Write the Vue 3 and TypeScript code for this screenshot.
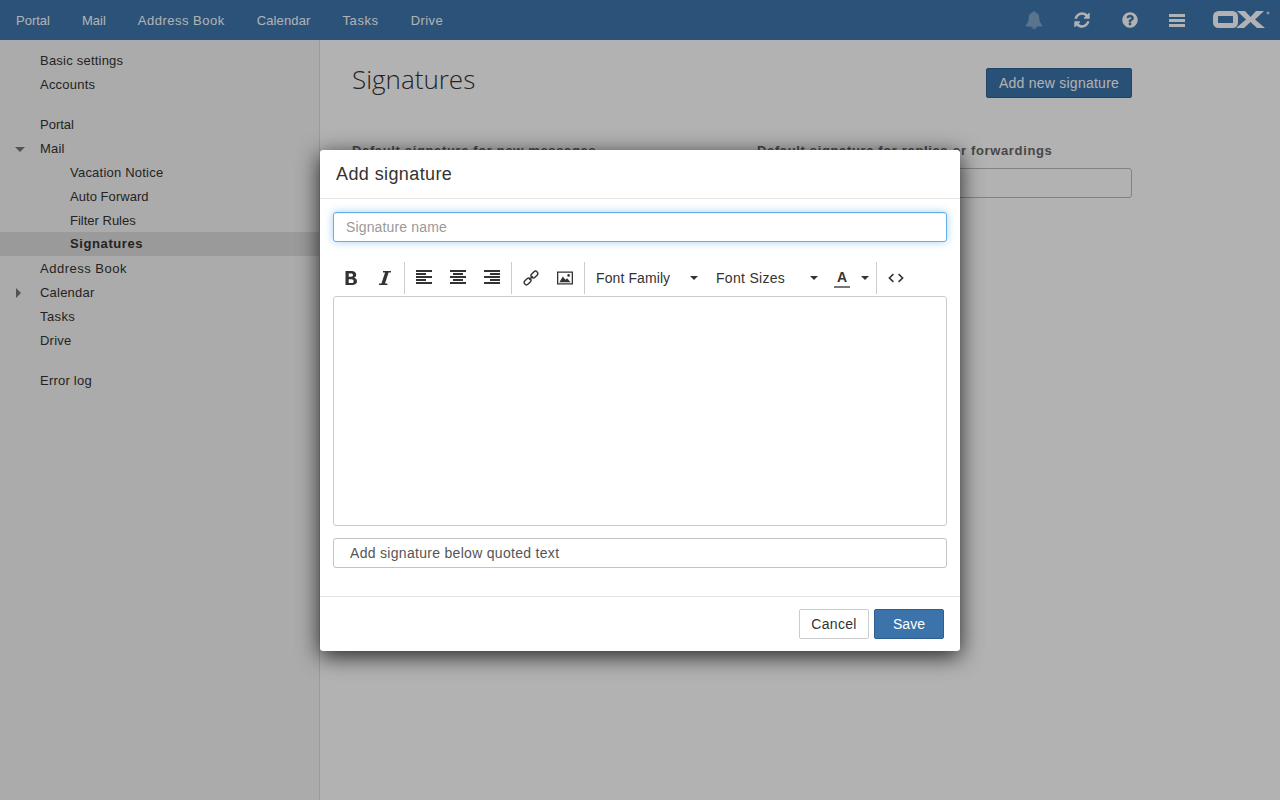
<script setup lang="ts">
const topNav: string[] = ['Portal', 'Mail', 'Address Book', 'Calendar', 'Tasks', 'Drive']
interface TreeItem { label: string; level: number; arrow?: 'down' | 'right'; active?: boolean; gap?: boolean }
const tree: TreeItem[] = [
  { label: 'Basic settings', level: 0 },
  { label: 'Accounts', level: 0 },
  { label: 'Portal', level: 0, gap: true },
  { label: 'Mail', level: 0, arrow: 'down' },
  { label: 'Vacation Notice', level: 1 },
  { label: 'Auto Forward', level: 1 },
  { label: 'Filter Rules', level: 1 },
  { label: 'Signatures', level: 1, active: true },
  { label: 'Address Book', level: 0 },
  { label: 'Calendar', level: 0, arrow: 'right' },
  { label: 'Tasks', level: 0 },
  { label: 'Drive', level: 0 },
  { label: 'Error log', level: 0, gap: true }
]
</script>

<template>
  <div class="page">
    <header class="topbar">
      <nav class="nav">
        <a v-for="n in topNav" :key="n" class="nav-item">{{ n }}</a>
      </nav>
      <div class="actions">
        <svg class="ic bell" viewBox="0 0 1792 1792"><path d="M912 1696q0-16-16-16-59 0-101.5-42.5t-42.5-101.5q0-16-16-16t-16 16q0 73 51.5 124.5t124.5 51.5q16 0 16-16zm816-288q0 52-38 90t-90 38h-448q0 106-75 181t-181 75-181-75-75-181h-448q-52 0-90-38t-38-90q50-42 91-88t85-119.5 74.5-158.5 50-206 19.5-260q0-152 117-282.5t307-158.5q-8-19-8-39 0-40 28-68t68-28 68 28 28 68q0 20-8 39 190 28 307 158.5t117 282.5q0 139 19.5 260t50 206 74.5 158.5 85 119.5 91 88z"/></svg>
        <svg class="ic" viewBox="0 0 1792 1792"><path d="M1639 1056q0 5-1 7-64 268-268 434.5t-478 166.5q-146 0-282.5-55t-243.5-157l-129 129q-19 19-45 19t-45-19-19-45v-448q0-26 19-45t45-19h448q26 0 45 19t19 45-19 45l-137 137q71 66 161 102t187 36q134 0 250-65t186-179q11-17 53-117 8-23 30-23h192q13 0 22.5 9.5t9.5 22.5zm25-800v448q0 26-19 45t-45 19h-448q-26 0-45-19t-19-45 19-45l138-138q-148-137-349-137-134 0-250 65t-186 179q-11 17-53 117-8 23-30 23h-199q-13 0-22.5-9.5t-9.5-22.5v-7q65-268 270-434.5t480-166.5q146 0 284 55.5t245 156.5l130-129q19-19 45-19t45 19 19 45z"/></svg>
        <svg class="ic help" viewBox="0 0 1792 1792"><path d="M1024 1376v-192q0-14-9-23t-23-9h-192q-14 0-23 9t-9 23v192q0 14 9 23t23 9h192q14 0 23-9t9-23zm256-672q0-88-55.5-163t-138.5-116-170-41q-243 0-371 213-15 24 8 42l132 100q7 6 19 6 16 0 25-12 53-68 86-92 34-24 86-24 48 0 85.5 26t37.5 59q0 38-20 61t-68 45q-63 28-115.5 86.5t-52.5 125.5v36q0 14 9 23t23 9h192q14 0 23-9t9-23q0-19 21.5-49.5t54.5-49.5q32-18 49-28.5t46-35 44.5-48 28-60.5 12.5-81zm384 192q0 209-103 385.5t-279.5 279.5-385.5 103-385.5-103-279.5-279.5-103-385.5 103-385.5 279.5-279.5 385.5-103 385.5 103 279.5 279.5 103 385.5z"/></svg>
        <svg class="ic bars" viewBox="0 0 16 16"><path d="M0 2h16v3H0zM0 7h16v3H0zM0 12h16v3H0z"/></svg>
        <svg class="logo" viewBox="0 0 58 20">
          <rect x="2.5" y="3.5" width="20" height="12" rx="3" fill="none" stroke="#fff" stroke-width="5"/>
          <path d="M24 1h8l5.5 6L43 1h8l-9 8.5L52 18h-8l-6.500-6L31 18h-8l10-8.500z" fill="#fff"/>
          <circle cx="55" cy="3" r="1.500" fill="#fff" opacity="0.7"/>
        </svg>
      </div>
    </header>

    <div class="main">
      <aside class="sidebar">
        <div
          v-for="t in tree"
          :key="t.label + t.level"
          class="tree-item"
          :class="{ sub: t.level === 1, active: t.active, gap: t.gap }"
        >
          <span v-if="t.arrow" class="arrow" :class="t.arrow"></span>
          {{ t.label }}
        </div>
      </aside>
      <section class="content">
        <div class="head">
          <h1>Signatures</h1>
          <button class="btn primary add">Add new signature</button>
        </div>
        <div class="defaults">
          <div class="col">
            <label>Default signature for new messages</label>
            <div class="fake-select"></div>
          </div>
          <div class="col">
            <label>Default signature for replies or forwardings</label>
            <div class="fake-select"></div>
          </div>
        </div>
      </section>
    </div>

    <div class="backdrop"></div>
    <div class="modal-wrap">
      <div class="modal">
        <div class="m-head">Add signature</div>
        <div class="m-body">
          <input class="name" type="text" placeholder="Signature name" />
          <div class="toolbar">
            <div class="grp first">
              <span class="tb"><svg viewBox="0 0 16 16" width="16" height="16"><path fill-rule="evenodd" d="M2.500 1h6c3 0 4.700 1.500 4.700 3.700 0 1.500-.8 2.600-2.100 3.100 1.800.5 2.900 1.700 2.900 3.500 0 2.600-2 3.700-4.900 3.700H2.500zM5.700 3.400v3.400h2.400c1.200 0 1.900-.6 1.900-1.700s-.7-1.700-1.900-1.700zM5.700 9.200v3.900h2.900c1.300 0 2-.7 2-1.950s-.7-1.950-2-1.950z"/></svg></span>
              <span class="tb"><svg viewBox="0 0 16 16" width="16" height="16"><path d="M6 1h8v1.500h-2.400L8 13.500h2.400V15H2v-1.500h2.400L8.100 2.500H6z"/></svg></span>
            </div>
            <div class="grp">
              <span class="tb"><svg viewBox="0 0 16 16" width="16" height="16"><path d="M0 0h16v2H0zM0 3h10v2H0zM0 6h16v2H0zM0 9h10v2H0zM0 12h16v2H0z"/></svg></span>
              <span class="tb"><svg viewBox="0 0 16 16" width="16" height="16"><path d="M0 0h16v2H0zM3 3h10v2H3zM0 6h16v2H0zM3 9h10v2H3zM0 12h16v2H0z"/></svg></span>
              <span class="tb"><svg viewBox="0 0 16 16" width="16" height="16"><path d="M0 0h16v2H0zM6 3h10v2H6zM0 6h16v2H0zM6 9h10v2H6zM0 12h16v2H0z"/></svg></span>
            </div>
            <div class="grp">
              <span class="tb"><svg viewBox="0 0 16 16" width="16" height="16" fill="none" stroke="#333" stroke-width="1.400"><rect x="-3.800" y="-2.300" width="7.600" height="4.600" rx="2.300" transform="translate(4.600 11.400) rotate(-45)"/><rect x="-3.800" y="-2.300" width="7.600" height="4.600" rx="2.300" transform="translate(11.400 4.600) rotate(-45)"/><path d="M6.200 9.800l3.600-3.600"/></svg></span>
              <span class="tb"><svg viewBox="0 0 16 16" width="16" height="16"><path fill-rule="evenodd" d="M0 1.500h16v13H0zM1.300 2.800v10.400h13.400V2.800z"/><path d="M2.400 12.200l3.400-5.600 2.600 3.200 1.600-1.600 3.600 4z"/><circle cx="11.600" cy="5.400" r="1.300"/></svg></span>
            </div>
            <div class="grp">
              <span class="drop family">Font Family<i class="caret"></i></span>
              <span class="drop sizes">Font Sizes<i class="caret"></i></span>
              <span class="drop color"><b class="a">A</b><i class="caret"></i></span>
            </div>
            <div class="grp last">
              <span class="tb"><svg viewBox="0 0 16 16" width="16" height="16" fill="none" stroke="#333" stroke-width="1.600"><path d="M5.400 4.200L1.400 8l4 3.800M10.600 4.200l4 3.800-4 3.800"/></svg></span>
            </div>
          </div>
          <div class="editor"></div>
          <div class="pos">Add signature below quoted text</div>
        </div>
        <div class="m-foot">
          <button class="btn cancel">Cancel</button>
          <button class="btn primary">Save</button>
        </div>
      </div>
    </div>
  </div>
</template>

<style>
html, body { margin: 0; background: #fff; }
</style>

<style scoped>
.page {
  position: relative;
  width: 1280px;
  height: 800px;
  overflow: hidden;
  font-family: "Liberation Sans", Arial, sans-serif;
  font-size: 13px;
  color: #333;
}
.topbar {
  height: 40px;
  background: #3e76ae;
  display: flex;
  justify-content: space-between;
  align-items: center;
  color: #fff;
}
.nav { display: flex; padding-left: 16px; gap: 32px; }
.nav-item { color: #fff; }
.nav-item:nth-child(3) { letter-spacing: 0.5px; }
.nav-item:nth-child(4) { letter-spacing: 0.12px; }
.nav-item:nth-child(5) { letter-spacing: 0.6px; }
.nav-item:nth-child(6) { letter-spacing: 0.4px; }
.actions { display: flex; align-items: center; padding-right: 9px; }
.ic { width: 18px; height: 18px; fill: #fff; margin-right: 30px; flex: none; }
.ic.bars { width: 16px; height: 16px; margin-right: 28px; }
.bell { opacity: 0.35; }
.logo { width: 58px; height: 20px; flex: none; }
.main { display: flex; height: 760px; }
.sidebar {
  width: 319px;
  background: #f5f5f5;
  border-right: 1px solid #ddd;
  padding-top: 9px;
  letter-spacing: 0.22px;
}
.tree-item {
  position: relative;
  height: 24px;
  line-height: 24px;
  padding-left: 40px;
  color: #333;
}
.tree-item:nth-child(3),
.tree-item:nth-child(7) { letter-spacing: 0; }
.tree-item:nth-child(6) { letter-spacing: 0.05px; }
.tree-item:nth-child(9) { letter-spacing: 0.5px; }
.tree-item:nth-child(11) { letter-spacing: 0.4px; }
.tree-item.gap { margin-top: 16px; }
.tree-item.sub { padding-left: 70px; }
.tree-item.active {
  background: #ddd;
  font-weight: 700;
  margin-top: -1px;
  margin-bottom: 1px;
  letter-spacing: 0.6px;
}
.arrow { position: absolute; width: 0; height: 0; }
.arrow.down {
  left: 15px; top: 10px;
  border-left: 5px solid transparent;
  border-right: 5px solid transparent;
  border-top: 5px solid #777;
}
.arrow.right {
  left: 16px; top: 7px;
  border-top: 5px solid transparent;
  border-bottom: 5px solid transparent;
  border-left: 5px solid #777;
}
.content { flex: 1; padding: 0 148px 0 32px; }
.head {
  display: flex;
  justify-content: space-between;
  align-items: flex-start;
  padding-top: 28px;
}
h1 {
  margin: -1px 0 0;
  font-family: "Open Sans", sans-serif;
  font-weight: 300;
  font-size: 26px;
  line-height: 24px;
  color: #333;
}
.btn {
  height: 30px;
  box-sizing: border-box;
  border: 1px solid #ccc;
  border-radius: 2px;
  background: #fff;
  color: #333;
  font: inherit;
  font-size: 14px;
  padding: 0;
  width: 70px;
  white-space: nowrap;
}
.btn.cancel { letter-spacing: 0.3px; }
.btn.primary {
  background: #3c73aa;
  border-color: #2f5f90;
  color: #fff;
}
.btn.add { width: 146px; letter-spacing: 0.25px; }
.defaults { display: flex; gap: 30px; margin-top: 44px; }
.col { flex: 1; }
.col label {
  display: block;
  font-weight: 700;
  line-height: 18px;
  margin-bottom: 8px;
  color: #666;
  letter-spacing: 0.64px;
}
.fake-select {
  height: 30px;
  box-sizing: border-box;
  border: 1px solid #bbb;
  border-radius: 3px;
  background: #fff;
}
.backdrop {
  position: absolute;
  inset: 0;
  background: rgba(0, 0, 0, 0.3);
}
.modal-wrap {
  position: absolute;
  inset: 0;
  display: flex;
  justify-content: center;
  padding-top: 150px;
  box-sizing: border-box;
}
.modal {
  width: 640px;
  height: 501px;
  background: #fff;
  border-radius: 3px;
  box-shadow: 0 5px 22px rgba(0, 0, 0, 0.8);
  display: flex;
  flex-direction: column;
}
.m-head {
  height: 49px;
  box-sizing: border-box;
  border-bottom: 1px solid #e5e5e5;
  font-size: 18px;
  line-height: 48px;
  padding-left: 16px;
  letter-spacing: 0.4px;
}
.m-body { padding: 13px 13px 0; flex: 1; }
.name {
  display: block;
  width: 100%;
  height: 30px;
  box-sizing: border-box;
  border: 1px solid #66afe9;
  border-radius: 3px;
  box-shadow: 0 0 8px rgba(102, 175, 233, 0.6), inset 0 1px 1px rgba(0, 0, 0, 0.075);
  outline: none;
  padding: 0 12px;
  font: inherit;
  font-size: 14px;
  letter-spacing: 0.15px;
  color: #333;
}
.name::placeholder { color: #999; opacity: 1; }
.toolbar {
  display: flex;
  align-items: stretch;
  height: 34px;
  margin-top: 20px;
  font-size: 14px;
}
.grp {
  display: flex;
  align-items: center;
  height: 32px;
  border-right: 1px solid #ccc;
  padding: 0 2px;
}
.grp.first { padding-left: 1px; }
.grp.last { border-right: none; }
.tb {
  width: 34px;
  height: 30px;
  display: flex;
  align-items: center;
  justify-content: center;
  fill: #333;
}
.drop { position: relative; display: block; height: 30px; line-height: 30px; box-sizing: border-box; letter-spacing: 0.1px; }
.caret {
  position: absolute;
  top: 13px;
  width: 0;
  height: 0;
  border-left: 4px solid transparent;
  border-right: 4px solid transparent;
  border-top: 4px solid #333;
}
.family { width: 120px; padding-left: 9px; }
.family .caret { left: 103px; }
.sizes { width: 120px; padding-left: 9px; letter-spacing: 0.3px; }
.sizes .caret { left: 103px; }
.color { width: 47px; }
.color .caret { left: 34px; }
.a {
  position: absolute;
  left: 7px;
  width: 16px;
  text-align: center;
  top: -1px;
  height: 24px;
  line-height: 31px;
  border-bottom: 2px solid #777;
  font-size: 14px;
}
.editor {
  height: 230px;
  box-sizing: border-box;
  border: 1px solid #ccc;
  border-radius: 3px;
}
.pos {
  margin-top: 12px;
  height: 30px;
  box-sizing: border-box;
  border: 1px solid #c4c4c4;
  border-radius: 3px;
  line-height: 28px;
  padding-left: 16px;
  font-size: 14px;
  letter-spacing: 0.3px;
  color: #555;
}
.m-foot {
  height: 55px;
  box-sizing: border-box;
  border-top: 1px solid #e5e5e5;
  padding: 12px 16px 0 0;
  display: flex;
  justify-content: flex-end;
  gap: 5px;
}
</style>
